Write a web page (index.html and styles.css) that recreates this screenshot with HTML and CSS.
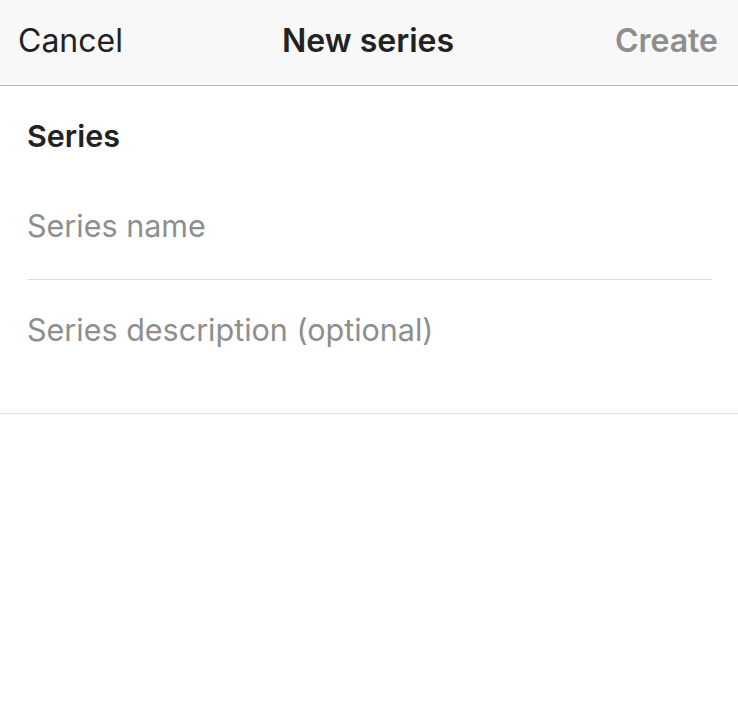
FILE: index.html
```html
<!DOCTYPE html>
<html>
<head>
<meta charset="utf-8">
<link rel="stylesheet" href="styles.css">
</head>
<body>
<div class="navbar">
  <div class="nav-left">Cancel</div>
  <div class="nav-title">New series</div>
  <div class="nav-right">Create</div>
</div>
<div class="form">
  <div class="section-title">Series</div>
  <div class="field name-field">Series name</div>
  <div class="field desc-field">Series description (optional)</div>
</div>
</body>
</html>
```
FILE: styles.css
```css
html, body {
  margin: 0;
  padding: 0;
  background: #ffffff;
  font-family: Inter, "Noto Sans", sans-serif;
}
.navbar {
  height: 81px;
  background: #f8f8f8;
  border-bottom: 1px solid #b2b2b2;
  display: flex;
  align-items: center;
  justify-content: space-between;
  padding: 0 20px 4px 18px;
  box-sizing: content-box;
  font-size: 32px;
  color: #222222;
}
.nav-left {
  font-weight: 400;
  width: 160px;
}
.nav-title {
  font-weight: 600;
  text-align: center;
}
.nav-right {
  font-weight: 600;
  color: #8e8e8e;
  width: 160px;
  text-align: right;
}
.form {
  border-bottom: 1px solid #dcdcdc;
}
.section-title {
  padding: 30px 27px 0 27px;
  font-size: 30.5px;
  font-weight: 600;
  color: #222222;
  line-height: 40px;
}
.field {
  margin-left: 27px;
  margin-right: 26px;
  font-size: 30.5px;
  color: #8e8e8e;
  line-height: 40px;
}
.name-field {
  padding: 50px 0 33px 0;
  border-bottom: 1px solid #dcdcdc;
}
.desc-field {
  padding: 30px 0 63px 0;
}
```
